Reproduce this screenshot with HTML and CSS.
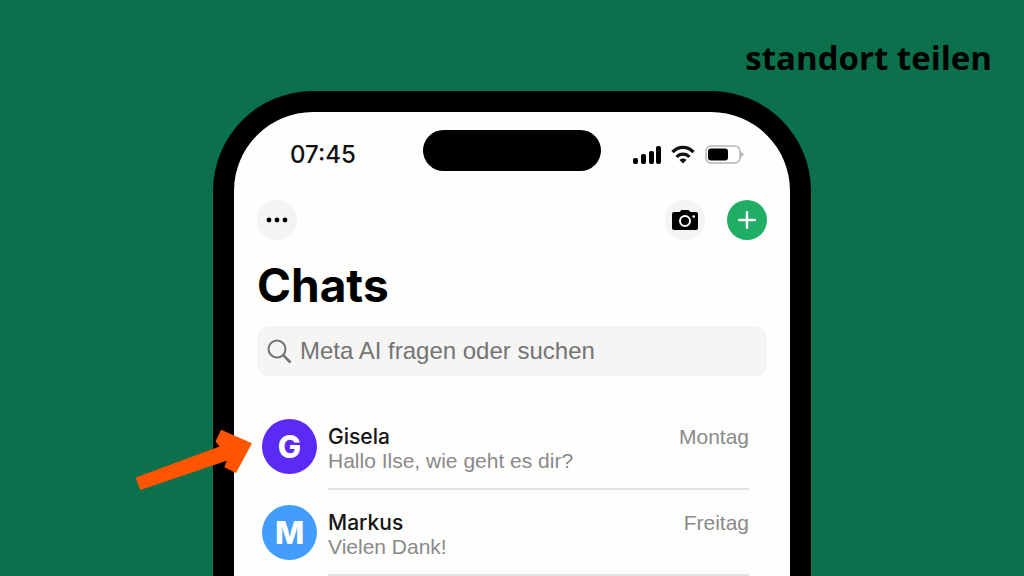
FILE: index.html
```html
<!DOCTYPE html>
<html lang="de">
  <head>
    <meta charset="UTF-8" />
    <meta name="viewport" content="width=device-width, initial-scale=1.0" />
    <title>Standort teilen</title>
    <link rel="stylesheet" href="styles.css">
  </head>
  <body>
    <header>
      <p class="caption">standort teilen</p>
    </header>
    <main class="phone">
      <div class="statusBar">
        <time class="clock">07:45</time>
        <div class="island"></div>
        <div class="statusIcons">
          <svg width="29" height="20" viewBox="0 0 29 20">
            <rect x="0" y="13" width="5" height="6" rx="2" />
            <rect x="8" y="9" width="5" height="10" rx="2" />
            <rect x="16" y="6" width="5" height="13" rx="2" />
            <rect x="23" y="1" width="5" height="18" rx="2" />
          </svg>
          <svg width="24" height="20" viewBox="0 0 24 20" fill="none" stroke="#111" stroke-width="3.200">
            <path d="M1.500 7.200C7.400 .8 16.600 .8 22.500 7.200" />
            <path d="M5.600 12C9.200 8.200 14.800 8.200 18.400 12" />
            <path d="M12 18.500L8.500 15C10.400 13 13.600 13 15.500 15Z" fill="#111" stroke="none" />
          </svg>
          <svg width="40" height="20" viewBox="0 0 40 20">
            <rect x="2" y="1" width="34" height="17" rx="5" fill="#fff" stroke="#b5b5b5" stroke-width="1.500" />
            <rect x="4" y="3.500" width="20" height="12" rx="3" />
            <path d="M36 6L40 9.500L36 13Z" fill="#b5b5b5" />
          </svg>
        </div>
      </div>

      <div class="toolbar">
        <button class="round" aria-label="Mehr">
          <svg width="22" height="6" viewBox="0 0 22 6">
            <circle cx="3" cy="3" r="2.400" />
            <circle cx="11" cy="3" r="2.400" />
            <circle cx="19" cy="3" r="2.400" />
          </svg>
        </button>
        <div class="actions">
          <button class="round" aria-label="Kamera">
            <svg width="26" height="22" viewBox="0 0 26 22">
              <path d="M2 3H7.500L9.500 1H16.500L18.500 3H24Q26 3 26 5V19Q26 21 24 21H2Q0 21 0 19V5Q0 3 2 3Z" />
              <circle cx="13" cy="12" r="5" fill="none" stroke="#fff" stroke-width="2" />
              <circle cx="21.700" cy="7.500" r="1.300" fill="#fff" />
            </svg>
          </button>
          <button class="round add" aria-label="Neuer Chat">
            <svg width="18" height="18" viewBox="0 0 18 18" fill="none" stroke="#fff" stroke-width="2.500" stroke-linecap="round">
              <path d="M9 1.200V16.800M1.200 9H16.800" />
            </svg>
          </button>
        </div>
      </div>

      <h1>Chats</h1>

      <label class="search">
        <svg width="25" height="25" viewBox="0 0 25 25" fill="none" stroke="#747474" stroke-width="2">
          <circle cx="10" cy="10" r="8.500" />
          <path d="M16.200 16.200L23.500 23.500" stroke-width="2.600" />
        </svg>
        <input type="search" placeholder="Meta AI fragen oder suchen" aria-label="Suchen" />
      </label>

      <ul class="chats">
        <li>
          <span class="avatar purple">G</span>
          <div class="chat">
            <div class="chatTop">
              <h2>Gisela</h2>
              <time>Montag</time>
            </div>
            <p>Hallo Ilse, wie geht es dir?</p>
          </div>
        </li>
        <li>
          <span class="avatar blue">M</span>
          <div class="chat">
            <div class="chatTop">
              <h2>Markus</h2>
              <time>Freitag</time>
            </div>
            <p>Vielen Dank!</p>
          </div>
        </li>
      </ul>

      <svg class="arrow" width="118" height="62" viewBox="0 0 118 62">
        <path d="M.7 49.500L84.500 18.500L80.500 13.500L86 1.700L117 15.300L101 45L89.300 39.300L91.700 32.700L5.300 62Z" fill="#ff5400" />
      </svg>
    </main>
  </body>
</html>
```
FILE: styles.css
```css
* {
  margin: 0;
  padding: 0;
  box-sizing: border-box;
}
body {
  min-height: 100vh;
  display: flex;
  flex-direction: column;
  align-items: center;
  overflow: hidden;
  background-color: #0c704c;
  font-family: Inter, "Liberation Sans", sans-serif;
}
header {
  width: 100%;
  padding: 34px 32px 9px;
  text-align: right;
}
.caption {
  font-family: "Open Sans", "Noto Sans", sans-serif;
  font-size: 33px;
  line-height: 48px;
  font-weight: bold;
}
.phone {
  position: relative;
  flex: 1;
  width: 100%;
  max-width: 598px;
  padding: 18px 23px 0;
  border: 21px solid #000;
  border-bottom: none;
  border-radius: 100px 100px 0 0;
  background-color: #fefefd;
}
.statusBar {
  display: grid;
  grid-template-columns: 1fr 178px 1fr;
  align-items: center;
}
.clock {
  padding: 8px 0 0 33px;
  font-size: 24px;
  font-weight: 500;
  color: #111;
}
.island {
  height: 41px;
  border-radius: 21px;
  background-color: #000;
}
.statusIcons {
  display: flex;
  justify-content: flex-end;
  gap: 9px;
  padding: 8px 23px 0 0;
}
.toolbar {
  display: flex;
  justify-content: space-between;
  margin-top: 29px;
}
.actions {
  display: flex;
  gap: 22px;
}
.round {
  width: 40px;
  height: 40px;
  display: flex;
  align-items: center;
  justify-content: center;
  border: none;
  border-radius: 50%;
  background-color: #f4f4f3;
}
.add {
  background-color: #1fae63;
}
h1 {
  margin-top: 17px;
  font-size: 46px;
  line-height: 56px;
}
.search {
  display: flex;
  align-items: center;
  gap: 8px;
  height: 50px;
  margin-top: 13px;
  padding: 0 10px;
  border-radius: 12px;
  background-color: #f5f5f4;
}
.search input {
  flex: 1;
  min-width: 0;
  border: none;
  outline: none;
  background: none;
  font-family: "Liberation Sans", Arial, sans-serif;
  font-size: 24px;
}
.search input::placeholder {
  color: #747474;
}
.chats {
  margin-top: 43px;
  padding: 0 18px 0 5px;
  list-style: none;
}
.chats li {
  display: flex;
  gap: 11px;
  height: 86px;
}
.avatar {
  width: 55px;
  height: 55px;
  border-radius: 50%;
  color: #fff;
  font-size: 31px;
  line-height: 55px;
  font-weight: 800;
  text-align: center;
}
.purple {
  background-color: #5b2bf5;
}
.blue {
  background-color: #429dfc;
}
.chat {
  flex: 1;
  height: 71px;
  padding-top: 6px;
  border-bottom: 2px solid #e3e3e3;
  font-family: "Liberation Sans", Arial, sans-serif;
  font-size: 21px;
  line-height: 24px;
  color: #8a8a8a;
}
.chatTop {
  display: flex;
  justify-content: space-between;
}
h2 {
  font-family: Inter, "Liberation Sans", sans-serif;
  font-size: 21px;
  font-weight: 500;
  color: #151515;
}
/* lies over the left edge of the phone and points at the first chat */
.arrow {
  position: absolute;
  top: 316px;
  left: -99px;
}
```
